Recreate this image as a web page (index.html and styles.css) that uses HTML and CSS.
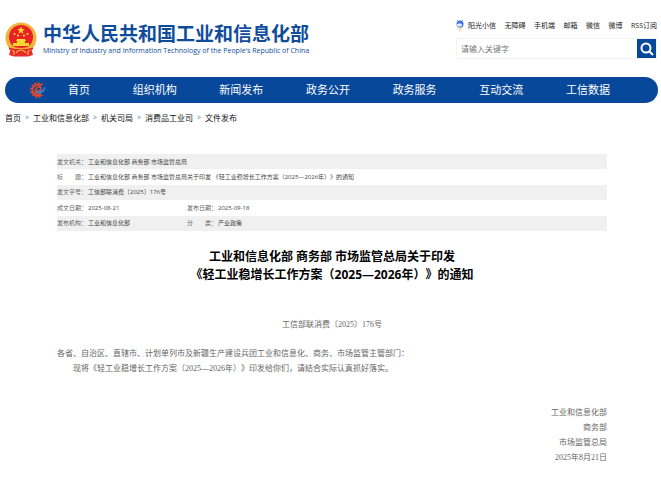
FILE: index.html
```html
<!DOCTYPE html>
<html lang="zh-CN">
<head>
<meta charset="utf-8">
<meta name="viewport" content="width=device-width, initial-scale=1">
<title>中华人民共和国工业和信息化部</title>
<link rel="stylesheet" href="styles.css">
</head>
<body>
<header class="site-header">
  <a class="brand" href="#">
    <svg class="emblem" viewBox="0 0 32 35" aria-hidden="true">
      <path d="M6 26 4 33l5 1.500h14l5-1.500-2-7z" fill="#e8292b"/>
      <circle cx="16" cy="16" r="15.500" fill="#efb43a"/>
      <circle cx="16" cy="15" r="12" fill="#e92127"/>
      <path d="m16 4.500 1.100 2.500 2.700.2-2.100 1.800.7 2.600-2.400-1.400-2.400 1.400.7-2.600-2.100-1.800 2.700-.2z" fill="#ffd62e"/>
      <g fill="#ffd62e"><circle cx="9.500" cy="12" r="1.100"/><circle cx="13" cy="13.500" r="1.100"/><circle cx="19" cy="13.500" r="1.100"/><circle cx="22.500" cy="12" r="1.100"/>
      <path d="M12 17h8l1 2h-1v2h4v3H8v-3h4v-2h-1z"/></g>
      <path d="M4 25.500q12 3 24 0v2l-5 1v5H9v-5l-5-1z" fill="#e8292b"/>
      <path d="M5 25q11 3 22 0M11 31q2-3 5-3t5 3M9 33v-4M23 33v-4" fill="none" stroke="#efb43a" stroke-width="1.200"/>
    </svg>
    <span class="brand-text">
      <span class="brand-cn">中华人民共和国工业和信息化部</span>
      <span class="brand-en">Ministry of Industry and Information Technology of the People's Republic of China</span>
    </span>
  </a>
  <div class="tools">
    <nav class="quick" aria-label="快捷入口">
      <a class="mascot-link" href="#"><svg class="mascot" viewBox="0 0 8 12" aria-hidden="true"><path d="M2 7h4l1 2-2 .500L4.500 12h-1L3 9.500 1 9z" fill="#f3dfc4"/><circle cx="4" cy="4" r="3.500" fill="#3f6fd8"/><rect x="1" y="3.500" width="5" height="3" rx="1.500" fill="#e6efff"/><path d="M2 1 1 0M6 1l1-1" stroke="#7fa2e8"/></svg>阳光小信</a>
      <a href="#">无障碍</a>
      <a href="#">手机端</a>
      <a href="#">邮箱</a>
      <a href="#">微信</a>
      <a href="#">微博</a>
      <a href="#">RSS订阅</a>
    </nav>
    <form class="search" role="search">
      <input type="search" placeholder="请输入关键字" aria-label="请输入关键字">
      <button type="button" aria-label="搜索"><svg viewBox="0 0 14 14" aria-hidden="true"><circle cx="6" cy="6" r="4.500"/><path d="m9.500 9.500 3.500 3.500"/></svg></button>
    </form>
  </div>
</header>
<nav class="main-nav" aria-label="主导航">
  <svg class="nav-logo" viewBox="0 0 16 16" aria-hidden="true">
    <path d="M12.500 2.800A7 7 0 1 0 12.500 13.200" fill="none" stroke="#e4482a" stroke-width="1.600" stroke-dasharray="2 1.400"/>
    <path d="M11.500 12.300A5.500 5.500 0 1 1 11 3.500" fill="none" stroke="#e4482a" stroke-width="2"/>
    <path d="M5.500 9C9 9.500 11.500 8 11 6S6.500 4.500 5.500 8s2 5 5.500 4" fill="none" stroke="#e4482a" stroke-width="1.600"/>
    <path d="M6.500 9.500c4.500.5 7.500-1.500 8-5.500 2 5-3 8-8 7z" fill="#2f8fd6"/>
  </svg>
  <ul>
    <li><a href="#">首页</a></li>
    <li><a href="#">组织机构</a></li>
    <li><a href="#">新闻发布</a></li>
    <li><a href="#">政务公开</a></li>
    <li><a href="#">政务服务</a></li>
    <li><a href="#">互动交流</a></li>
    <li><a href="#">工信数据</a></li>
  </ul>
</nav>
<nav class="crumbs" aria-label="当前位置">
  <a href="#">首页</a><span>&gt;</span><a href="#">工业和信息化部</a><span>&gt;</span><a href="#">机关司局</a><span>&gt;</span><a href="#">消费品工业司</a><span>&gt;</span><a href="#">文件发布</a>
</nav>
<main>
  <table class="meta">
    <colgroup><col class="c-label"><col class="c-value"><col class="c-label"><col></colgroup>
    <tbody>
    <tr><th scope="row"><span class="label">发文机关：</span></th><td colspan="3">工业和信息化部 商务部 市场监管总局</td></tr>
    <tr><th scope="row"><span class="label split"><span>标</span><span>题：</span></span></th><td colspan="3">工业和信息化部 商务部 市场监管总局关于印发 《轻工业稳增长工作方案（2025—2026年）》的通知</td></tr>
    <tr><th scope="row"><span class="label">发文字号：</span></th><td colspan="3">工信部联消费〔2025〕176号</td></tr>
    <tr><th scope="row"><span class="label">成文日期：</span></th><td>2025-08-21</td><th scope="row"><span class="label">发布日期：</span></th><td>2025-09-18</td></tr>
    <tr><th scope="row"><span class="label">发布机构：</span></th><td>工业和信息化部</td><th scope="row"><span class="label split"><span>分</span><span>类：</span></span></th><td>产业政策</td></tr>
    </tbody>
  </table>
  <article>
    <h1>工业和信息化部 商务部 市场监管总局关于印发<br>《轻工业稳增长工作方案（2025—2026年）》的通知</h1>
    <p class="doc-no">工信部联消费〔2025〕176号</p>
    <p>各省、自治区、直辖市、计划单列市及新疆生产建设兵团工业和信息化、商务、市场监管主管部门：</p>
    <p class="indent">现将《轻工业稳增长工作方案（2025—2026年）》印发给你们，请结合实际认真抓好落实。</p>
    <div class="signature">
      <p>工业和信息化部</p>
      <p>商务部</p>
      <p>市场监管总局</p>
      <p>2025年8月21日</p>
    </div>
  </article>
</main>
</body>
</html>
```
FILE: styles.css
```css
* { box-sizing: border-box; }
body {
  margin: 0;
  background: #fff;
  color: #222;
  font-family: "Open Sans", "Noto Sans CJK SC", sans-serif;
  font-size: 8px;
  text-spacing-trim: space-all;
}
a { color: inherit; text-decoration: none; }
p, h1, ul { margin: 0; padding: 0; }

.site-header {
  display: flex;
  justify-content: space-between;
  align-items: flex-start;
  padding: 20px 4px 0 5px;
}
.brand { display: flex; gap: 6px; padding-top: 2px; color: #0f4c9c; }
.emblem { width: 32px; height: 35px; }
.brand-text { display: flex; flex-direction: column; white-space: nowrap; }
.brand-cn { font-size: 19px; line-height: 24px; font-weight: 700; }
.brand-en { font-size: 7px; line-height: 10px; font-weight: 400; }

.tools { width: 201px; }
.quick {
  display: flex;
  justify-content: space-between;
  font-size: 7px;
  line-height: 12px;
  white-space: nowrap;
}
.mascot-link { display: flex; gap: 4px; }
.mascot { width: 8px; height: 12px; }
.search { display: flex; height: 21px; margin-top: 6px; border: 1px solid #f4f4f4; }
.search input {
  flex: 1;
  min-width: 0;
  border: 0;
  padding: 0 4px;
  background: none;
  font: inherit;
}
.search input::placeholder { color: #777; }
.search button {
  display: grid;
  place-items: center;
  width: 19px;
  padding: 0;
  border: 0;
  background: #08489a;
}
.search svg { width: 14px; height: 14px; fill: none; stroke: #fff; stroke-width: 2; }

.main-nav {
  display: flex;
  align-items: center;
  height: 26px;
  margin: 18px 3px 0 5px;
  padding: 0 48px 0 25px;
  border-radius: 13px;
  background: #08489a;
  color: #fff;
}
.nav-logo { width: 16px; height: 16px; margin-right: 22px; }
.main-nav ul {
  display: flex;
  flex: 1;
  justify-content: space-between;
  list-style: none;
  font-size: 11px;
  line-height: 16px;
}

.crumbs {
  display: flex;
  gap: 4px;
  padding: 9px 5px 0;
  line-height: 12px;
  color: #111;
}
.crumbs span { color: #3a6ea5; font-size: 7px; }

main { padding: 30px 54px 20px 57px; }
.meta {
  width: 100%;
  height: 77px;
  border-collapse: collapse;
  table-layout: fixed;
  font-size: 6px;
  line-height: 10px;
  color: #444;
}
.meta th, .meta td { padding: 0; font-weight: 400; text-align: left; }
.meta tr:nth-child(odd) { background: #f0f0f0; }
.c-label { width: 31px; }
.c-value { width: 99px; }
.label { display: flex; width: 30px; color: #666; }
.split { justify-content: space-between; }

h1 {
  margin-top: 17px;
  font-size: 12px;
  line-height: 18px;
  font-weight: 700;
  text-align: center;
  color: #000;
}
article p {
  font-family: "Liberation Serif", "Noto Sans CJK SC", serif;
  line-height: 15px;
  color: #666;
}
article .doc-no { margin: 33px 0 14px; text-align: center; }
.indent { text-indent: 2em; }
.signature { margin-top: 29px; text-align: right; }
```
